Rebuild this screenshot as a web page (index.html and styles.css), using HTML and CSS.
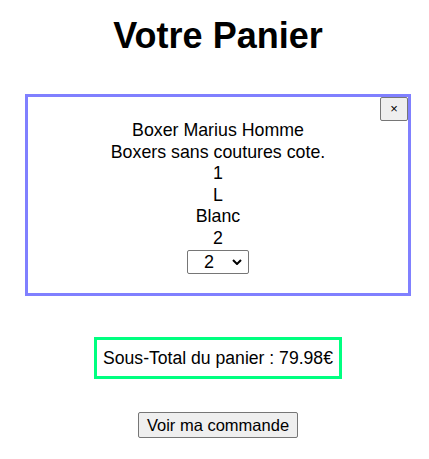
FILE: index.html
```html
<!DOCTYPE html>
<html lang="fr">
<head>
<meta charset="utf-8">
<title>Votre Panier</title>
<link rel="stylesheet" href="styles.css">
</head>
<body>
<h1 class="title">Votre Panier</h1>
<div class="cart-item">
  <button class="close-btn" type="button">×</button>
  <div class="line">Boxer Marius Homme</div>
  <div class="line">Boxers sans coutures cote.</div>
  <div class="line">1</div>
  <div class="line">L</div>
  <div class="line">Blanc</div>
  <div class="line">2</div>
  <select class="qty">
    <option>1</option>
    <option selected>2</option>
    <option>3</option>
  </select>
</div>
<div class="total-wrap">
  <div class="total">Sous-Total du panier : 79.98€</div>
</div>
<div class="action">
  <button class="order-btn" type="button">Voir ma commande</button>
</div>
</body>
</html>
```

FILE: styles.css
```css
html, body {
  background: #ffffff;
}
body {
  margin: 0;
  padding: 15px 8px 0 15px;
  font-family: "Liberation Sans", Arial, sans-serif;
  color: #000;
}
.title {
  margin: 0 0 38px;
  font-size: 36px;
  font-weight: bold;
  line-height: 41px;
  text-align: center;
}
.cart-item {
  position: relative;
  margin: 0 10px;
  border: 3px solid #8080ff;
  padding: 23px 0 19px;
  text-align: center;
  font-size: 17.8px;
}
.line {
  line-height: 21.5px;
}
.close-btn {
  position: absolute;
  top: 0;
  right: 0;
  width: 28px;
  height: 24px;
  padding: 0;
  border: 1px solid #767676;
  border-radius: 2px;
  background: #efefef;
  font-family: "Liberation Sans", Arial, sans-serif;
  font-size: 13px;
  line-height: 20px;
  color: #000;
}
.qty {
  display: block;
  margin: 1px auto 0;
  width: 62px;
  height: 24px;
  padding: 0 0 0 16px;
  border: 1px solid #767676;
  border-radius: 2px;
  -webkit-appearance: none;
  appearance: none;
  background: #fff url("data:image/svg+xml,%3Csvg xmlns='http://www.w3.org/2000/svg' width='10' height='6' viewBox='0 0 10 6'%3E%3Cpath d='M1 1l4 4 4-4' fill='none' stroke='%23000' stroke-width='2'/%3E%3C/svg%3E") no-repeat right 6px center;
  font-family: "Liberation Sans", Arial, sans-serif;
  font-size: 18px;
  color: #000;
}
.total-wrap {
  margin-top: 41px;
  display: flex;
  justify-content: center;
}
.total {
  border: 3px solid #00ff80;
  padding: 7px 6px;
  font-size: 17.6px;
  line-height: 22px;
}
.action {
  margin-top: 33px;
  display: flex;
  justify-content: center;
}
.order-btn {
  height: 26px;
  padding: 0 8px;
  border: 1px solid #767676;
  border-radius: 2px;
  background: #efefef;
  font-family: "Liberation Sans", Arial, sans-serif;
  font-size: 16.5px;
  color: #000;
}
```
